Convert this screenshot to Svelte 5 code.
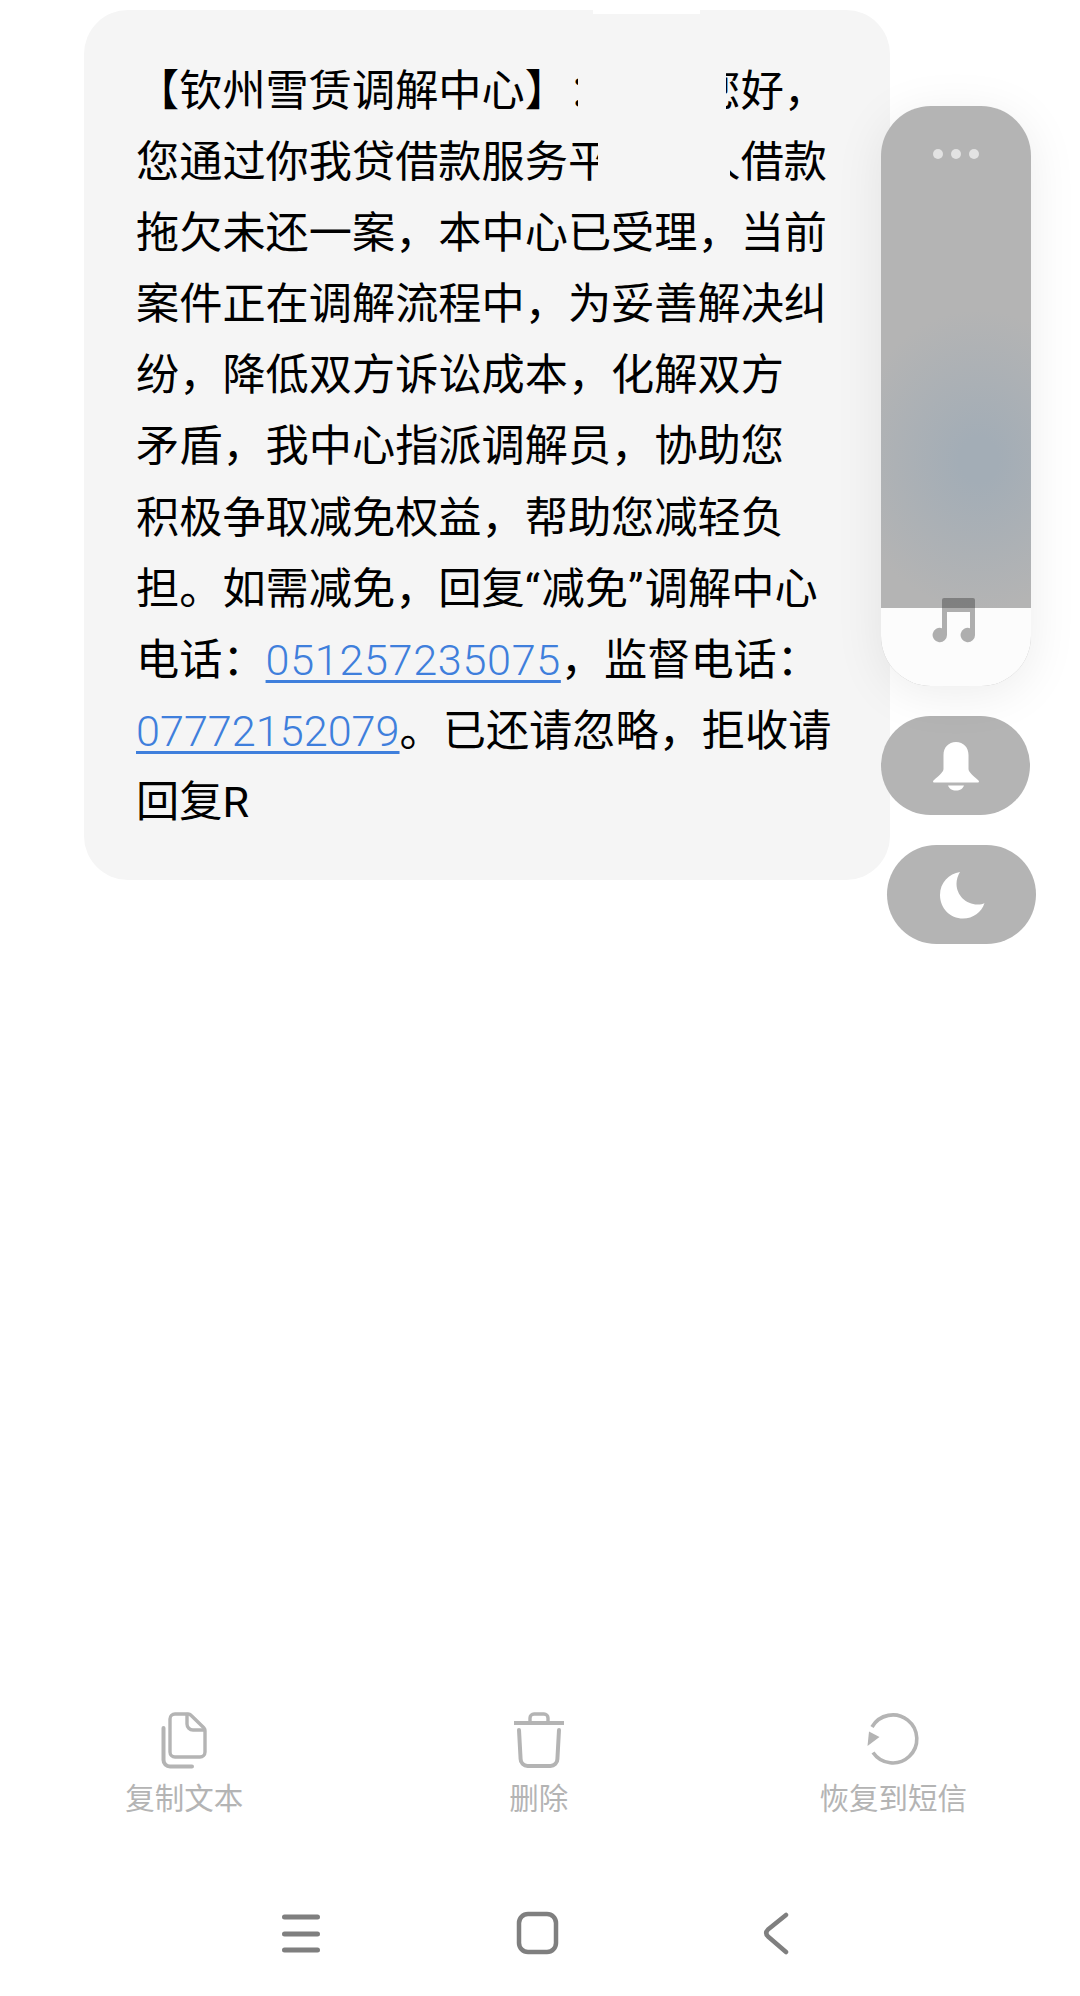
<script>
  const lines = [
    '拖欠未还一案，本中心已受理，当前',
    '案件正在调解流程中，为妥善解决纠',
    '纷，降低双方诉讼成本，化解双方',
    '矛盾，我中心指派调解员，协助您',
    '积极争取减免权益，帮助您减轻负'
  ];
</script>

<div class="page" lang="zh-CN">
  <div class="bubble">
    <div class="top-patch"></div>
    <p>【钦州雪赁调解中心】：客户您好，</p>
    <p>您通过你我贷借款服务平台个人借款</p>
    {#each lines as line}
      <p>{line}</p>
    {/each}
    <p>担。如需减免，回复<span class="quote">“</span>减免<span class="quote">”</span>调解中心</p>
    <p>电话：<a class="wide" href="tel:051257235075">051257235075</a>，监督电话：</p>
    <p><a href="tel:07772152079">07772152079</a>。已还请忽略，拒收请</p>
    <p>回复R</p>
    <div class="patch patch-a"></div>
    <div class="patch patch-b"></div>
  </div>

  <div class="actions">
    <div class="action">
      <svg width="60" height="60" viewBox="0 0 60 60" fill="none" stroke="#b4b4b4" stroke-width="3.4" stroke-linecap="round" stroke-linejoin="round">
        <path d="M21 4h13a4 4 0 0 1 3 1.200l12.800 12.500a4 4 0 0 1 1.200 3V42a5 5 0 0 1-5 5H21a5 5 0 0 1-5-5V9a5 5 0 0 1 5-5z" />
        <path d="M33 4.500V14a6 6 0 0 0 6 6h11.500" />
        <path d="M9.500 18v32a6.500 6.500 0 0 0 6.500 6.500H38" stroke-width="4" />
      </svg>
      <span>复制文本</span>
    </div>
    <div class="action">
      <svg width="60" height="60" viewBox="0 0 60 60" fill="none" stroke="#b4b4b4" stroke-width="4" stroke-linecap="round" stroke-linejoin="round">
        <path d="M5 13h50" stroke-linecap="butt" />
        <path d="M21 12V8a4 4 0 0 1 4-4h10a4 4 0 0 1 4 4v4" stroke-width="3.4" />
        <path d="M10 20l1.600 29a7 7 0 0 0 7 7h22.800a7 7 0 0 0 7-7L50 20" />
      </svg>
      <span>删除</span>
    </div>
    <div class="action">
      <svg width="60" height="60" viewBox="0 0 60 60" fill="none" stroke="#b4b4b4" stroke-width="3.600">
        <path d="M9 17A24 24 0 1 1 10 42.500" />
        <path d="M4.500 36L6 21.500L16.500 27z" fill="#b4b4b4" stroke="none" />
      </svg>
      <span>恢复到短信</span>
    </div>
  </div>

  <div class="nav">
    <svg width="40" height="44" viewBox="0 0 40 44" fill="none" stroke="#7f7f7f" stroke-width="5" stroke-linecap="round">
      <path d="M3.500 6h33M3.500 23h33M3.500 39h33" />
    </svg>
    <svg width="44" height="44" viewBox="0 0 44 44" fill="none" stroke="#7f7f7f" stroke-width="4.500">
      <rect x="3" y="3" width="37" height="38" rx="9" />
    </svg>
    <svg width="44" height="44" viewBox="0 0 44 44" fill="none" stroke="#7f7f7f" stroke-width="4.500" stroke-linecap="round" stroke-linejoin="round">
      <path d="M32 4L14 18.500Q10.500 22 14 25.500L32 41" />
    </svg>
  </div>

  <div class="floating">
    <div class="panel">
      <div class="dots"><i></i><i></i><i></i></div>
      <div class="glow"></div>
      <svg class="note" width="44" height="46" viewBox="0 0 44 46">
        <path fill="rgba(36,36,36,.36)" d="M11 3a2 2 0 0 1 2-2h29a2 2 0 0 1 2 2v35a7.200 7.200 0 1 1-5-6.800V15H16v23a7.200 7.200 0 1 1-5-6.800z" />
      </svg>
      <div class="panel-foot"></div>
    </div>
    <div class="pill">
      <svg width="48" height="50" viewBox="0 0 48 50" fill="#fff">
        <path d="M24 1c7.500 0 12.500 5.500 12.500 13v14c0 3 5 7 10 11.500c.8.800.5 2-.8 2H2.300c-1.300 0-1.600-1.200-.8-2C6.500 35 11.500 31 11.500 28V14C11.500 6.500 16.500 1 24 1z" />
        <path d="M16 44.500h16c-1 3-4 5-8 5s-7-2-8-5z" />
      </svg>
    </div>
    <div class="pill moon">
      <svg width="46" height="48" viewBox="0 0 46 48" fill="#fff">
        <path d="M21 1C10 2.500 1 11.500 1 24c0 13 10 23.500 23 23.500c10 0 18.500-6 21.500-15.500c-1.500 1-4 1.500-7 1.500C27 33.500 17.500 24 17.500 13c0-4.500 1.300-8.500 3.500-12z" />
      </svg>
    </div>
  </div>
</div>

<style>
  :global(body) {
    background: #fff;
  }

  .page {
    position: relative;
    width: 1080px;
    height: 1996px;
    overflow: hidden;
    display: flex;
    flex-direction: column;
    background: #fff;
    font-family: Roboto, "Noto Sans CJK SC", sans-serif;
    text-spacing-trim: space-all;
  }

  .bubble {
    position: relative;
    box-sizing: border-box;
    width: 806px;
    height: 870px;
    margin: 10px 0 0 84px;
    padding: 46px 0 0 52px;
    border-radius: 44px;
    background: #f5f5f5;
    color: #000;
    font-size: 43.200px;
    line-height: 71.100px;
  }

  .bubble p {
    margin: 0;
    white-space: nowrap;
  }

  .bubble a {
    color: #3f7fdc;
    font-weight: 300;
    text-decoration: underline;
    text-decoration-thickness: 3px;
    text-underline-offset: 5px;
  }

  .quote {
    letter-spacing: 1.500px;
  }

  .wide {
    letter-spacing: 0.650px;
  }

  .top-patch {
    position: absolute;
    top: 0;
    left: 509px;
    width: 107px;
    height: 4px;
    background: #fff;
  }

  .patch {
    position: absolute;
    background: #f5f5f5;
  }

  .patch-a {
    top: 50px;
    left: 494px;
    width: 148px;
    height: 60px;
  }

  .patch-b {
    top: 122px;
    left: 514px;
    width: 132px;
    height: 60px;
  }

  .actions {
    display: grid;
    grid-template-columns: repeat(3, 354.500px);
    margin-top: 830px;
    padding-left: 7px;
  }

  .action {
    display: flex;
    flex-direction: column;
    align-items: center;
    color: #b4b4b4;
    font-size: 29.500px;
    line-height: 40px;
  }

  .action span {
    margin-top: 9px;
  }

  .nav {
    display: grid;
    grid-template-columns: repeat(3, 237.500px);
    justify-items: center;
    margin-top: 92px;
    padding-left: 182px;
  }

  .floating {
    position: absolute;
    top: 106px;
    left: 881px;
    display: flex;
    flex-direction: column;
    gap: 30px;
  }

  .panel {
    position: relative;
    width: 150px;
    height: 580px;
    overflow: hidden;
    border-radius: 50px;
    background: #b4b4b4;
    box-shadow: 0 8px 50px rgba(0, 0, 0, 0.08);
  }

  .dots {
    display: flex;
    justify-content: center;
    gap: 8px;
    margin-top: 43px;
  }

  .dots i {
    width: 10px;
    height: 10px;
    border-radius: 50%;
    background: #e2e2e2;
  }

  .glow {
    position: absolute;
    top: 204px;
    left: -32px;
    width: 260px;
    height: 300px;
    background: radial-gradient(closest-side, #a3adb6 15%, rgba(163, 173, 182, 0));
  }

  .panel-foot {
    position: absolute;
    left: 0;
    right: 0;
    bottom: 0;
    height: 78px;
    background: #fcfcfc;
  }

  .note {
    position: absolute;
    top: 491px;
    left: 50px;
    z-index: 1;
  }

  .pill {
    display: flex;
    align-items: center;
    justify-content: center;
    width: 149px;
    height: 99px;
    border-radius: 50px;
    background: #b4b4b4;
  }

  .moon {
    margin-left: 6px;
  }
</style>
